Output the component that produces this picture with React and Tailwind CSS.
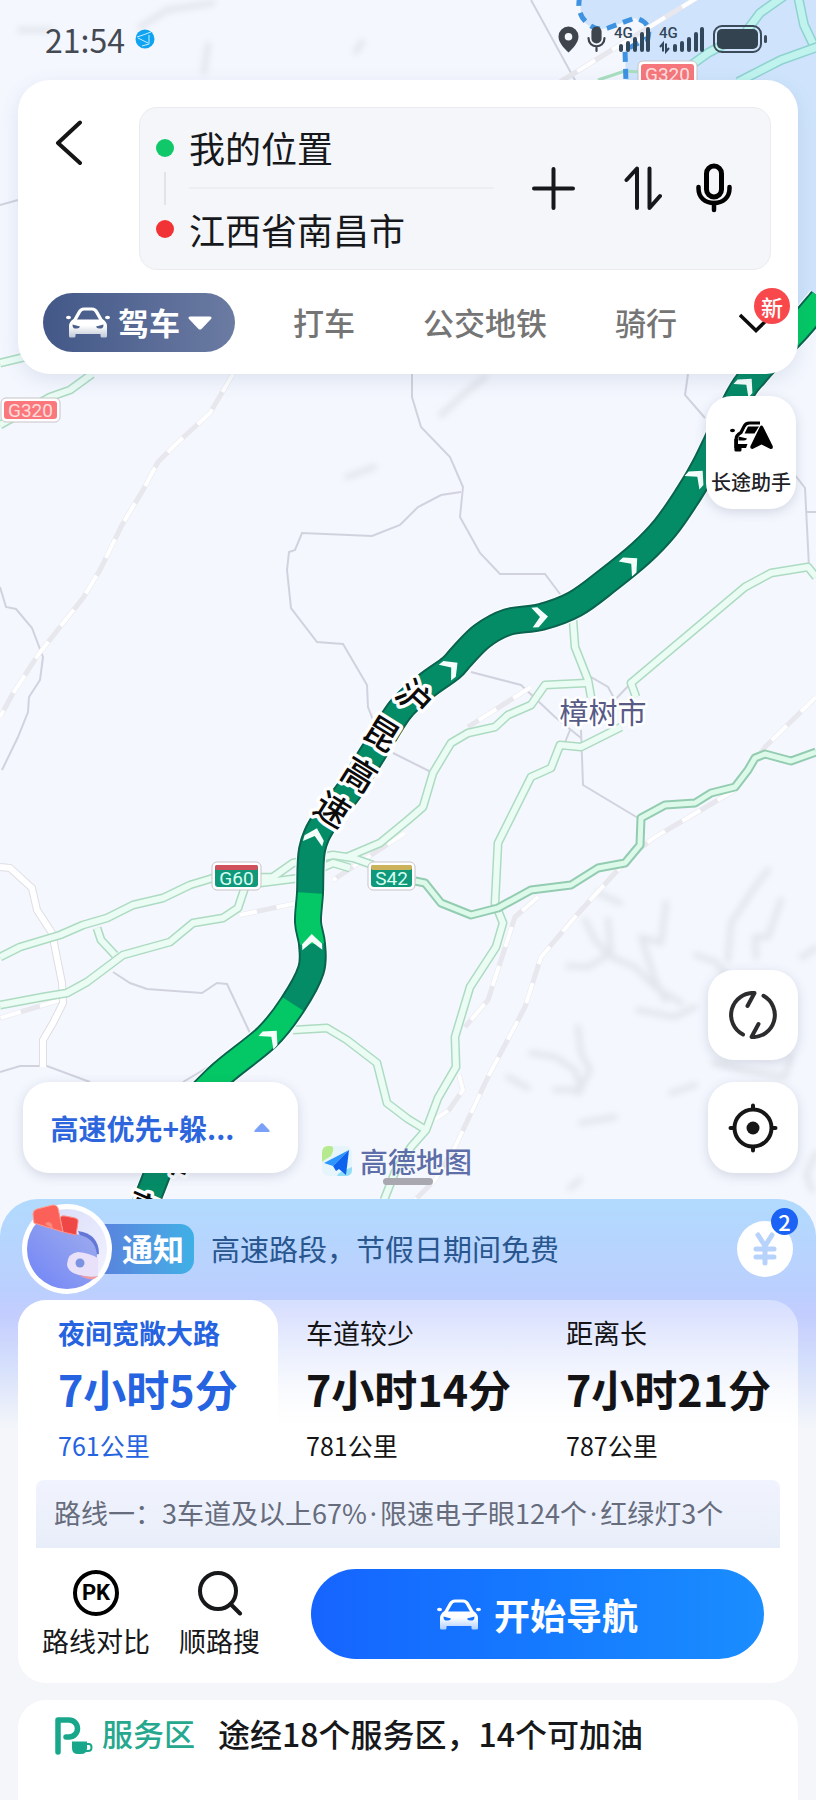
const greenRoads = [
  'M0 957L20 947L60 935L83 925L107 918L133 905L163 898L190 885L213 878L273 877L293 863L333 855L353 858L373 865',
  'M0 1005L43 997L67 993L87 982L123 955L170 942L193 923L223 918L238 908L245 887',
  'M97 928L101 940L115 955',
  'M260 883L300 878L333 863L350 868',
  'M347 857L380 843L408 820L423 807L433 773L451 743L468 733L495 727L508 715L531 705L545 685L586 683',
  'M573 620L575 647L588 680L591 697',
  'M636 697L631 683L745 587L771 573L808 567L816 577',
  'M621 727L581 747L560 745L551 768L531 777L498 843L495 903L503 923L496 947L470 987L455 1037L456 1067L438 1098L426 1130L411 1147L395 1172L384 1200',
  'M293 1030L327 1028L347 1040L377 1063L387 1103L408 1119L426 1130',
  'M0 363L25 357',
  'M92 374L70 390L50 397L0 425',
];

const expressways = [
  'M415 881L425 883L441 903L471 915L498 908L531 890L571 885L598 868L625 863L640 845L641 818L665 805L695 803L711 793L735 787L748 770L755 758L765 754L791 761L816 752',
];

const tealRoads = [
  'M798 -4L804 25L815 48',
  'M784 -4L760 13L745 33L708 53L690 66',
  'M820 46L781 60L738 82',
];

const railways = [
  'M233 374L210 413L175 445L158 462L143 490L122 525L100 570L83 598L60 627L38 655L12 695L0 717',
  'M816 697L765 747L735 790L655 837L638 850L615 873L575 917L541 957L525 1007L488 1077L455 1147L435 1180L410 1205',
  'M538 897L515 917L488 1000L465 1027',
  'M531 687L468 727',
  'M297 903L240 915',
  'M405 833L333 880',
  'M60 1000L0 1018',
  'M459 1075L463 1090L449 1110L434 1120',
  'M700 -4L620 45L560 82',
];

const boundaries = [
  'M0 587L6 607L16 609L32 628L43 657L40 680L29 697L28 712L18 737L2 770',
  'M461 492L441 495L418 507L400 525L372 536L302 533L295 550L289 552L287 570L291 608L317 642L343 644L367 685L368 707L373 720',
  'M412 374L412 397L421 427L450 457L463 487L460 517L480 553L500 574L545 574L563 598',
  'M688 374L685 395L705 418',
  'M795 475L805 488L809 567M806 512L816 512',
  'M471 672L521 685L555 717L581 738',
  'M570 730L564 745M581 730L583 785L638 818',
  'M591 677L608 687L615 700M631 683L612 703',
  'M0 205L18 200M531 0L576 82',
  'M113 972L130 983L147 989L202 993L217 983L227 984L250 1033',
  'M0 1072L20 1066L47 1066L90 1082M183 1082L220 1060',
  'M393 753L431 772',
];

const ridges = [
  'M585 920L595 940L611 957L635 967L655 987L681 1003M608 920L611 953L588 967L568 966',
  'M666 903L661 943L641 937L655 980L665 1000M768 870L755 887L731 923L728 960',
  'M781 900L768 937L755 937L756 957M696 955L716 962L726 975',
  'M531 1053L555 1057L575 1070L581 1090L555 1090M578 1027L581 1053L590 1070L578 1093',
  'M508 1077L528 1088M581 1123L615 1117M638 1010L675 1017L695 1007M671 1093L695 1085',
  'M714 1063L741 1070L785 1077L791 1057M816 1153L806 1175L812 1190M802 957L816 948',
  'M213 3L167 10L140 27M50 30L20 30M208 45L204 72M362 42L356 52',
  'M485 377L465 393L441 415M347 477L374 467M598 893L620 903M580 1180L570 1188',
];

const routePoints = [
  [822, 300], [798, 328], [776, 351], [755, 374], [739, 396], [705, 466], [686, 498], [665, 528],
  [641, 553], [608, 580], [575, 604], [541, 617], [508, 622], [482, 636], [462, 656], [451, 668],
  [426, 686], [400, 710], [373, 753], [348, 792], [324, 822], [312, 850], [310, 893], [308, 922],
  [312, 944], [311, 970], [293, 1004], [267, 1037], [217, 1078], [180, 1122], [150, 1192], [140, 1220],
];

function smoothPath(points, from = 0, to = points.length - 1) {
  let d = `M${points[from][0]} ${points[from][1]}`;
  for (let i = from; i < to; i += 1) {
    const before = points[i - 1] ?? points[i];
    const start = points[i];
    const end = points[i + 1];
    const after = points[i + 2] ?? end;
    d += `C${start[0] + (end[0] - before[0]) / 6} ${start[1] + (end[1] - before[1]) / 6}`;
    d += ` ${end[0] - (after[0] - start[0]) / 6} ${end[1] - (after[1] - start[1]) / 6}`;
    d += ` ${end[0]} ${end[1]}`;
  }
  return d;
}

const route = smoothPath(routePoints);
const clearStretches = [
  smoothPath(routePoints, 0, 2),
  smoothPath(routePoints, 22, 24),
  smoothPath(routePoints, 26, 29),
];

const chevrons = [
  [541, 617, -4],
  [452, 667, -38],
  [632, 563, -42],
  [698, 476, -48],
  [747, 384, -48],
  [315, 835, -74],
  [312, 941, -92],
  [272, 1036, -48],
];

const roadName = [
  ['沪', 414, 698, 42],
  ['昆', 381, 734, 32],
  ['高', 359, 775, 32],
  ['速', 332, 810, 32],
  ['津', 175, 1160, 24],
  ['高', 143, 1209, 24],
];

function MapShield({ x, y, width, height, fill, strip, ink, label }) {
  return (
    <g>
      <rect x={x} y={y} width={width} height={height} rx="5" fill="#fff" stroke="#c9c3c8" />
      <rect x={x + 3} y={y + 3} width={width - 6} height={height - 6} rx="3" fill={fill} />
      {strip && <rect x={x + 3} y={y + 3} width={width - 6} height="5" rx="2" fill={strip} />}
      <text
        x={x + width / 2}
        y={y + height - 5}
        fontSize="19"
        textAnchor="middle"
        fill={ink}
        className="font-['Roboto',sans-serif]"
      >
        {label}
      </text>
    </g>
  );
}

function MapCanvas() {
  return (
    <svg
      className="absolute inset-x-0 top-0 h-[1240px] w-full"
      viewBox="0 0 816 1240"
      preserveAspectRatio="xMidYMin slice"
      fill="none"
      aria-hidden="true"
    >
      <defs>
        <filter id="soft" x="-5%" y="-5%" width="110%" height="110%">
          <feGaussianBlur stdDeviation="3" />
        </filter>
      </defs>
      <rect width="816" height="1240" fill="#f4f7fe" />
      <path
        d="M580 -4L581 20L595 30L608 28L635 18L648 27L646 40L625 50L626 90L780 300L816 320V-4Z"
        fill="#cfe4fc"
      />
      <g filter="url(#soft)" stroke="#e2e6ec" strokeWidth="6" strokeLinejoin="round" strokeLinecap="round">
        {ridges.map((d) => (
          <path key={d} d={d} />
        ))}
      </g>
      <g stroke="#d1d2de" strokeWidth="2">
        {boundaries.map((d) => (
          <path key={d} d={d} />
        ))}
      </g>
      {railways.map((d) => (
        <g key={d}>
          <path d={d} stroke="#e7e7ed" strokeWidth="5" />
          <path d={d} stroke="#fff" strokeWidth="4" strokeDasharray="21 20" />
        </g>
      ))}
      <path
        d="M0 867L10 868L32 888L37 910L52 933L62 983L63 1003L53 1023L43 1040L43 1067"
        stroke="#dedde2"
        strokeWidth="8"
      />
      <path
        d="M0 867L10 868L32 888L37 910L52 933L62 983L63 1003L53 1023L43 1040L43 1067"
        stroke="#fff"
        strokeWidth="6"
      />
      <g strokeLinejoin="round">
        <g stroke="#addbc1" strokeWidth="9">
          {greenRoads.map((d) => (
            <path key={d} d={d} />
          ))}
        </g>
        <g stroke="#eafcf4" strokeWidth="6">
          {greenRoads.map((d) => (
            <path key={d} d={d} />
          ))}
        </g>
        {expressways.map((d) => (
          <g key={d}>
            <path d={d} stroke="#93ccb0" strokeWidth="9" />
            <path d={d} stroke="#dcf9ea" strokeWidth="5" />
          </g>
        ))}
        {tealRoads.map((d) => (
          <g key={d}>
            <path d={d} stroke="#8fd2cf" strokeWidth="10" />
            <path d={d} stroke="#c0f3ee" strokeWidth="7" />
          </g>
        ))}
        <path d="M598 80L625 71L640 72" stroke="#a9dfbf" strokeWidth="3" />
      </g>
      <path
        d="M580 -4Q576 12 586 22T608 28L635 18Q652 22 648 38L625 50L626 84"
        stroke="#3d93e2"
        strokeWidth="5"
        strokeDasharray="10 7"
      />

      <g strokeLinejoin="round">
        <path d={route} stroke="#fff" strokeWidth="30" />
        <path d={route} stroke="#0a6350" strokeWidth="28" />
        <path d={route} stroke="#048c66" strokeWidth="24" />
        {clearStretches.map((d) => (
          <path key={d} d={d} stroke="#04c865" strokeWidth="24" />
        ))}
      </g>
      {chevrons.map(([x, y, angle]) => (
        <path
          key={`${x}-${y}`}
          d="M-9-10H-3L7 0L-3 10H-9L-1 0Z"
          fill="#f4fffb"
          transform={`translate(${x} ${y}) rotate(${angle})`}
        />
      ))}
      <g className="font-['Noto_Sans_CJK_SC',sans-serif] font-medium" fontSize="34" textAnchor="middle">
        {roadName.map(([char, x, y, angle]) => (
          <text
            key={`${char}-${y}`}
            y="12"
            transform={`translate(${x} ${y}) rotate(${angle})`}
            fill="#0b0b0b"
            stroke="#fff"
            strokeWidth="7"
            strokeLinejoin="round"
            paintOrder="stroke"
          >
            {char}
          </text>
        ))}
      </g>
      <text
        x="603"
        y="724"
        fontSize="29"
        textAnchor="middle"
        fill="#575b86"
        stroke="#fff"
        strokeWidth="5"
        strokeLinejoin="round"
        paintOrder="stroke"
        className="font-['Noto_Sans_CJK_SC',sans-serif]"
      >
        樟树市
      </text>
      <MapShield x={638} y={61} width={59} height={25} fill="#f6777b" ink="#ffe0e0" label="G320" />
      <MapShield x={1} y={398} width={59} height={24} fill="#fa787b" ink="#ffdcdc" label="G320" />
      <MapShield x={212} y={862} width={49} height={28} fill="#10987a" strip="#d0505c" ink="#d8fff2" label="G60" />
      <MapShield x={368} y={862} width={47} height={28} fill="#10987a" strip="#cdb25c" ink="#d8fff2" label="S42" />
    </svg>
  );
}

function CarIcon() {
  return (
    <svg width="44" height="31" viewBox="0 0 44 31" aria-hidden="true">
      <defs>
        <linearGradient id="carFill" x1="0" y1="0" x2="0" y2="1">
          <stop offset="0.6" stopColor="#fff" />
          <stop offset="1" stopColor="#fff" stopOpacity="0.65" />
        </linearGradient>
      </defs>
      <path
        fill="url(#carFill)"
        fillRule="evenodd"
        d="M12 4Q14 .5 18 .5H26Q30 .5 32 4L36.500 12Q41 15 41 19V29Q41 30.500 39.500 30.500H36Q34.500 30.500 34.500 29V27H9.500V29Q9.500 30.500 8 30.500H4.500Q3 30.500 3 29V19Q3 15 7.500 12ZM15 5.500L11 12.500H33L29 5.500Q28 3.500 26 3.500H18Q16 3.500 15 5.500ZM6.500 17.500L14 19.500Q13.500 21.500 11 21.500H8.500Q6.500 21 6.500 17.500ZM37.500 17.500L30 19.500Q30.500 21.500 33 21.500H35.500Q37.500 21 37.500 17.500Z"
      />
      <ellipse cx="2.500" cy="10.500" rx="2.500" ry="1.800" fill="#fff" />
      <ellipse cx="41.500" cy="10.500" rx="2.500" ry="1.800" fill="#fff" />
    </svg>
  );
}

function SignalIcon({ data }) {
  return (
    <svg
      width={data ? 46 : 37}
      height="36"
      viewBox={data ? '0 -5 46 36' : '0 -5 37 36'}
      fill="#33475a"
      aria-hidden="true"
    >
      <text x="0" y="12" fontSize="15" className="font-['Roboto',sans-serif] font-medium">
        4G
      </text>
      <g transform={data ? 'translate(9 0)' : undefined}>
        <rect x="5" y="18" width="4" height="8" rx="2" />
        <rect x="12" y="15" width="4" height="11" rx="2" />
        <rect x="19" y="11" width="4" height="15" rx="2" />
        <rect x="26" y="6" width="4" height="20" rx="2" />
        <rect x="32" y="1" width="4" height="25" rx="2" />
      </g>
      {data && (
        <path d="M1 21L4 17.500V25.500M7 17.500V25.500L10 22" fill="none" stroke="#33475a" strokeWidth="2" />
      )}
    </svg>
  );
}

function StatusBar() {
  return (
    <header className="flex h-20 items-center justify-between pr-12 pb-0.5 pl-[45px] text-[#454a52]">
      <div className="flex items-center gap-2.5">
        <time className="text-[32px] leading-10">21:54</time>
        <svg width="20" height="20" viewBox="0 0 20 20" fill="none" stroke="#c8efff" aria-hidden="true">
          <circle cx="10" cy="10" r="9.500" fill="#0fa3f0" stroke="none" />
          <path d="M2 8L8 6L16 3M3 9L13 14M14 6L14 15L7 17" />
        </svg>
      </div>
      <div className="flex items-center gap-2">
        <svg width="21" height="27" viewBox="0 0 21 27" aria-hidden="true">
          <path
            fill="#3f454d"
            fillRule="evenodd"
            d="M10.500.5A10 10 0 0 1 20.500 10.500C20.500 17 14.500 22.500 10.500 26.500C6.500 22.500.5 17 .5 10.500A10 10 0 0 1 10.500.5ZM10.500 7A3.800 3.800 0 1 0 10.500 14.600A3.800 3.800 0 1 0 10.500 7Z"
          />
        </svg>
        <svg width="19" height="27" viewBox="0 0 19 27" fill="none" stroke="#3f454d" strokeWidth="2.200" strokeLinecap="round" aria-hidden="true">
          <rect x="5.500" y="1.500" width="8" height="15" rx="4" fill="#3f454d" />
          <path d="M1.500 12C1.500 23 17.500 23 17.500 12M9.500 20.500V25" />
        </svg>
        <SignalIcon />
        <SignalIcon data />
        <svg width="55" height="28" viewBox="0 0 55 28" fill="none" aria-hidden="true">
          <rect x="1" y="1" width="47" height="26" rx="8" stroke="#3c4b59" strokeWidth="2" />
          <rect x="4" y="4" width="41" height="20" rx="5" fill="#33434f" />
          <rect x="51" y="10" width="3" height="8" rx="1.500" fill="#3c4b59" />
        </svg>
      </div>
    </header>
  );
}

function SearchCard() {
  return (
    <section className="mx-[18px] rounded-[32px] bg-white pt-[27px] pb-[22px] shadow-[0_6px_20px_rgba(60,80,130,0.12)]">
      <div className="flex items-start pr-[27px] pl-[31px]">
        <button type="button" aria-label="返回" className="mt-3 w-[90px] shrink-0">
          <svg width="40" height="46" viewBox="0 0 40 46" fill="none" stroke="#151515" strokeWidth="4" strokeLinecap="round" strokeLinejoin="round" aria-hidden="true">
            <path d="M31 3.500L9 24L31 44" />
          </svg>
        </button>
        <div className="flex min-w-0 flex-1 items-center rounded-[18px] border border-[#e9ebee] bg-[#f5f6fa] pt-2.5 pr-[38px] pb-[11px] pl-4">
          <div className="flex flex-col items-center gap-[15px]" aria-hidden="true">
            <span className="size-[18px] rounded-full bg-[#10c86a]" />
            <span className="h-[33px] w-0.5 bg-[#e1e3e8]" />
            <span className="size-[18px] rounded-full bg-[#f23336]" />
          </div>
          <div className="ml-[15px] flex min-w-0 flex-1 flex-col">
            <input
              aria-label="起点"
              defaultValue="我的位置"
              className="h-[58px] w-full min-w-0 bg-transparent text-[36px] text-[#16181b] outline-none"
            />
            <div className="my-[11px] h-0.5 bg-[#eceef1]" />
            <input
              aria-label="终点"
              defaultValue="江西省南昌市"
              className="h-[58px] w-full min-w-0 bg-transparent text-[36px] text-[#16181b] outline-none"
            />
          </div>
          <div className="ml-[38px] flex items-center">
            <button type="button" aria-label="添加途经点">
              <svg width="43" height="43" viewBox="0 0 43 43" stroke="#16181b" strokeWidth="4" strokeLinecap="round" aria-hidden="true">
                <path d="M21.500 2V41M2 21.500H41" />
              </svg>
            </button>
            <button type="button" aria-label="交换起终点" className="ml-[49px]">
              <svg width="38" height="44" viewBox="0 0 38 44" fill="none" stroke="#16181b" strokeWidth="4" strokeLinecap="round" strokeLinejoin="round" aria-hidden="true">
                <path d="M13 42V2.500L2.500 14M25.500 2.500V42L36 30" />
              </svg>
            </button>
            <button type="button" aria-label="语音输入" className="ml-[34px]">
              <svg width="36" height="50" viewBox="0 0 36 50" fill="none" stroke="#000" strokeLinecap="round" aria-hidden="true">
                <rect x="10.500" y="3" width="15" height="31" rx="7.500" strokeWidth="5" />
                <path d="M2.500 24V25.500C2.500 34.500 9 40 18 40S33.500 34.500 33.500 25.500V24" strokeWidth="4.500" />
                <path d="M18 40V47" strokeWidth="4.500" />
              </svg>
            </button>
          </div>
        </div>
      </div>

      <nav className="mt-[23px] flex items-center gap-[58px] pl-[25px]">
        <button
          type="button"
          className="flex h-[59px] w-[192px] shrink-0 items-center rounded-full bg-linear-to-r from-[#435888] to-[#6b7ba2] pl-[23px] text-[31px] font-bold text-white"
        >
          <CarIcon />
          <span className="ml-2">驾车</span>
          <svg width="24" height="14" viewBox="0 0 24 14" className="ml-2" aria-hidden="true">
            <path d="M2 .5H22Q24.500 1 23 3L13.500 13Q12 14 10.500 13L1 3Q-.5 1 2 .5Z" fill="#fff" />
          </svg>
        </button>
        <div className="flex items-center gap-[68px] text-[31px] font-medium text-[#757575]">
          <button type="button">打车</button>
          <button type="button">公交地铁</button>
          <button type="button">骑行</button>
          <button type="button" aria-label="更多出行方式" className="relative -ml-1.5 flex">
            <svg width="34" height="20" viewBox="0 0 34 20" fill="none" stroke="#0c0c0c" strokeWidth="3.500" aria-hidden="true">
              <path d="M1 2L17 17.500L33 2" />
            </svg>
            <span className="absolute -top-[25px] left-[15px] flex size-9 items-center justify-center rounded-full bg-[#f8484c] text-[22px] leading-none font-medium text-white">
              新
            </span>
          </button>
        </div>
      </nav>
    </section>
  );
}

const floating = 'flex items-center justify-center rounded-[26px] bg-white shadow-[0_3px_12px_rgba(60,70,100,0.18)]';

function MapControls() {
  return (
    <>
      <button
        type="button"
        className={`${floating} mt-[22px] mr-5 h-[113px] w-[90px] flex-col gap-[18px] self-end pt-2.5`}
      >
        <svg width="43" height="31" viewBox="0 0 43 31" fill="none" aria-hidden="true">
          <ellipse cx="2.500" cy="9.500" rx="2.500" ry="1.700" fill="#000" />
          <path d="M30 2H19.500Q15.500 2 14 5.500L11 11.500Q6 14 6 19V27" stroke="#000" strokeWidth="3.200" />
          <path d="M18 5.500H29L24.500 12.500H14.500Z" fill="#000" />
          <path d="M8.500 15.500L17 17.500Q16.500 19.500 14 19.500H8.500Z" fill="#000" />
          <path d="M4.400 18V29Q4.400 30.500 6 30.500H10Q11.500 30.500 11.500 29V27H16L17.500 23H8V18Z" fill="#000" />
          <path d="M30 5.500Q31.500 3.500 33 5.500L42.700 25Q43.500 28 40.500 28L31.500 23.500L22.500 28Q19.500 28 20.500 25Z" fill="#000" />
        </svg>
        <span className="text-[20px] leading-6 font-medium whitespace-nowrap text-[#1f2226]">长途助手</span>
      </button>

      <div className="mt-auto flex items-end pr-[18px] pb-[26px] pl-[23px]">
        <button
          type="button"
          className={`${floating} h-[91px] w-[275px] gap-5 text-[28px] font-bold text-[#2d66dc]`}
        >
          高速优先+躲...
          <svg width="16" height="9" viewBox="0 0 16 9" aria-hidden="true">
            <path d="M7 .5Q8 0 9 .5L15.500 7.500Q16 9 14.500 9H1.500Q0 9 .5 7.500Z" fill="#7aa0f7" />
          </svg>
        </button>
        <div className="ml-[23px] flex h-6 items-center gap-[7px] whitespace-nowrap">
          <svg width="32" height="32" viewBox="0 0 32 32" aria-hidden="true">
            <rect x="1" y="1" width="30" height="30" rx="7" fill="#e6f4fb" />
            <path d="M1 17V8Q1 1 7 1H9Q13 1 12 6L10 11L5 14Z" fill="#b5ea8e" />
            <path d="M31 22V25Q31 31 24 31H16Q17 28 20 27Z" fill="#8fdef5" />
            <path d="M28 5L3 18L12 21Z" fill="#2d95ff" />
            <path d="M28 5L12 21L15 26L18 24L25 30Z" fill="#0d62ee" />
          </svg>
          <span className="text-[28px] leading-8 font-medium text-[#5d6ea8] [text-shadow:0_0_2px_#fff]">高德地图</span>
        </div>
        <div className="ml-auto flex flex-col gap-[22px]">
          <button type="button" aria-label="刷新路线" className={`${floating} size-[90px]`}>
            <svg width="48" height="48" viewBox="0 0 48 48" fill="none" stroke="#2c2c2e" strokeWidth="4" strokeLinecap="round" strokeLinejoin="round" aria-hidden="true">
              <path d="M14 43.500A22 22 0 0 1 25.500 2L18.500 15M34.500 4.800A22 22 0 0 1 22.500 46L29.500 33" />
            </svg>
          </button>
          <button type="button" aria-label="定位" className={`${floating} h-[91px] w-[90px]`}>
            <svg width="50" height="50" viewBox="0 0 50 50" fill="none" stroke="#161616" strokeWidth="4" strokeLinecap="round" aria-hidden="true">
              <circle cx="25" cy="25" r="18.500" />
              <path d="M25 2.500V6M25 44V47.500M2.500 25H6M44 25H47.500" />
              <circle cx="25" cy="25" r="6.500" fill="#161616" stroke="none" />
            </svg>
          </button>
        </div>
      </div>
      <span className="absolute bottom-[14px] left-1/2 h-[7px] w-[50px] -translate-x-1/2 rounded-full bg-[#a9a8b0]" />
    </>
  );
}

function WalletBadge() {
  return (
    <svg width="90" height="90" viewBox="0 0 90 90" className="relative shrink-0" aria-hidden="true">
      <defs>
        <linearGradient id="walletBack" x1="0" y1="0" x2="1" y2="1">
          <stop offset="0" stopColor="#d5dbf8" />
          <stop offset="1" stopColor="#f4f3ff" />
        </linearGradient>
        <linearGradient id="walletBody" x1="0" y1="1" x2="1" y2="0">
          <stop offset="0" stopColor="#6c80f8" />
          <stop offset="1" stopColor="#a2b0ec" />
        </linearGradient>
        <clipPath id="walletClip">
          <circle cx="45" cy="45" r="40" />
        </clipPath>
      </defs>
      <circle cx="45" cy="45" r="45" fill="#fff" />
      <circle cx="45" cy="45" r="40" fill="url(#walletBack)" />
      <g clipPath="url(#walletClip)">
        <path d="M56 27Q77 30 77 50L66 52Z" fill="#6577d6" />
        <path d="M8 15L12 18L58 31Q74 35 75 52L76 74Q60 92 30 90L0 74Z" fill="url(#walletBody)" />
      </g>
      <path d="M38 14Q39 11 43 12L53 14Q57 15 56 18L54 31L41 28Z" fill="#ee4746" stroke="#ff8c84" />
      <path d="M11 10Q11 6 15 5L31 1Q35 1 36 4L41 28L12 19Z" fill="#fb6158" stroke="#ff9a90" />
      <path d="M23 20Q26 16 30 20L31 25Z" fill="#ff8a7c" />
      <path d="M56 48Q67 49 76 54V73Q68 74 57 71Q45 68 45 60Q46 49 56 48Z" fill="#e9e0fa" />
      <path d="M57 71Q68 74 76 72L72 75Q64 76 57 71Z" fill="#ef9aa0" />
      <circle cx="58" cy="59" r="4.500" fill="#7c93e2" />
    </svg>
  );
}

function Notice() {
  return (
    <div className="flex h-[101px] items-center pr-[23px] pb-0.5 pl-[22px]">
      <WalletBadge />
      <strong className="-ml-4 flex h-[50px] items-center rounded-r-[14px] bg-linear-to-r from-[#5a80dd] to-[#3eb0e6] pr-2.5 pl-[26px] text-[31px] font-bold whitespace-nowrap text-white">
        通知
      </strong>
      <p className="ml-[17px] text-[29px] whitespace-nowrap text-[#29568e]">高速路段，节假日期间免费</p>
      <button
        type="button"
        aria-label="费用提醒 2"
        className="relative ml-auto flex size-14 shrink-0 items-center justify-center rounded-full bg-white"
      >
        <svg width="26" height="36" viewBox="0 0 26 36" fill="none" stroke="#b7d2fb" strokeWidth="5" strokeLinecap="round" aria-hidden="true">
          <path d="M6 4L13 15L20 4M4 18H22M4 26H22M13 17V32" />
        </svg>
        <span className="absolute -top-[13px] -right-[5px] flex size-[27px] items-center justify-center rounded-full bg-[#1c62f4] text-[22px] leading-none font-medium text-white">
          2
        </span>
      </button>
    </div>
  );
}

const routes = [
  { name: '夜间宽敞大路', time: '7小时5分', distance: '761公里', selected: true },
  { name: '车道较少', time: '7小时14分', distance: '781公里' },
  { name: '距离长', time: '7小时21分', distance: '787公里' },
];

function RouteTabs() {
  return (
    <div className="grid grid-cols-3">
      {routes.map((option) => (
        <button
          key={option.name}
          type="button"
          aria-pressed={Boolean(option.selected)}
          className={
            option.selected
              ? 'flex h-[180px] flex-col items-start rounded-t-[28px] bg-white pt-[15px] pl-10 whitespace-nowrap text-[#2563e0]'
              : 'flex h-[180px] flex-col items-start pt-[15px] pl-7 whitespace-nowrap text-[#141416]'
          }
        >
          <span className={option.selected ? 'text-[27px] leading-9 font-bold' : 'text-[27px] leading-9'}>
            {option.name}
          </span>
          <span className="mt-[7px] text-[43px] leading-[60px] font-bold">{option.time}</span>
          <span className="mt-[9px] text-[25px] leading-9">{option.distance}</span>
        </button>
      ))}
    </div>
  );
}

function Dot() {
  return <span className="px-[3px] font-['Noto_Sans',sans-serif]">·</span>;
}

function ActionBar() {
  return (
    <div className="flex items-center rounded-b-[28px] bg-white pt-[21px] pr-[34px] pb-6 pl-6">
      <button type="button" className="flex shrink-0 flex-col items-center gap-[7px] text-[27px] leading-9 text-[#17181a]">
        <span className="flex size-[46px] items-center justify-center rounded-full border-4 border-black font-['Roboto',sans-serif] text-[22px] leading-none font-bold text-black">
          PK
        </span>
        路线对比
      </button>
      <button type="button" className="ml-[29px] flex shrink-0 flex-col items-center gap-[7px] text-[27px] leading-9 text-[#17181a]">
        <svg width="46" height="46" viewBox="0 0 46 46" fill="none" stroke="#17181a" strokeWidth="4" strokeLinecap="round" aria-hidden="true">
          <circle cx="21" cy="21" r="18" />
          <path d="M33.500 34L43 43.500" />
        </svg>
        顺路搜
      </button>
      <button
        type="button"
        className="ml-[51px] flex h-[90px] min-w-0 flex-1 items-center justify-center gap-[13px] rounded-full bg-linear-to-r from-[#1664ff] to-[#1b8dff] text-[36px] font-bold whitespace-nowrap text-white"
      >
        <CarIcon />
        开始导航
      </button>
    </div>
  );
}

function ServiceArea() {
  return (
    <section className="mx-[18px] mt-[17px] flex flex-1 items-start rounded-t-[28px] bg-white pt-2.5 pl-[37px] whitespace-nowrap">
      <svg width="38" height="38" viewBox="0 0 38 38" fill="none" className="mt-[7px]" aria-hidden="true">
        <path d="M3 35V3H14A8.500 8.500 0 0 1 14 20H11" stroke="#19a78b" strokeWidth="5.500" strokeLinecap="round" strokeLinejoin="round" />
        <path d="M17 24.500H32V31Q32 37 26 37H23Q17 37 17 31Z" fill="#19a78b" />
        <path d="M31 27H34Q36.500 27 36.500 30.500T33 34H30" stroke="#19a78b" strokeWidth="2" />
      </svg>
      <span className="ml-[9px] text-[31px] leading-[46px] font-medium text-[#26a88e]">服务区</span>
      <span className="ml-[23px] text-[32px] leading-[46px] font-medium text-[#17181a]">途经18个服务区，14个可加油</span>
    </section>
  );
}

export default function App() {
  return (
    <main
      lang="zh-CN"
      className="flex min-h-screen flex-col overflow-x-hidden bg-[#f4f6f9] font-['Noto_Sans_CJK_SC',sans-serif]"
    >
      <section className="relative flex min-h-[1199px] flex-col">
        <MapCanvas />
        <div className="relative flex flex-1 flex-col">
          <StatusBar />
          <SearchCard />
          <MapControls />
        </div>
      </section>

      <section className="relative flex flex-1 flex-col rounded-t-[38px] bg-[#f4f6f9] bg-[linear-gradient(180deg,#b1dafe_0px,#bccffe_95px,#c3cdfe_115px,#d5dffc_165px,#f4f6f9_230px)]">
        <Notice />
        <div className="mx-[18px] rounded-[28px] bg-[linear-gradient(180deg,rgba(255,255,255,0.35)_0px,rgba(255,255,255,0.6)_60px,#ffffff_130px)]">
          <RouteTabs />
          <p className="mx-[18px] h-[68px] rounded-t-lg bg-linear-to-b from-[#f1f3fe] to-[#e8eef9] pl-[18px] text-[27px] leading-[66px] whitespace-nowrap text-[#666c7c]">
            路线一：3车道及以上67%
            <Dot />
            限速电子眼124个
            <Dot />
            红绿灯3个
          </p>
          <ActionBar />
        </div>
        <ServiceArea />
      </section>
    </main>
  );
}
